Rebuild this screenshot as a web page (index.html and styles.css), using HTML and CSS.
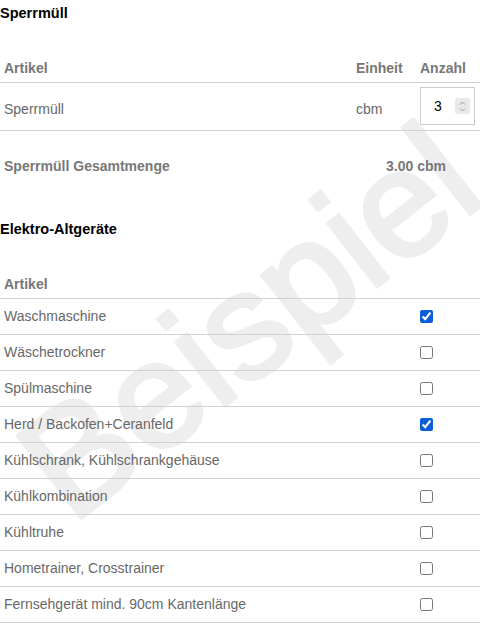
FILE: index.html
```html
<!DOCTYPE html>
<html lang="de">
<head>
    <meta charset="UTF-8">
    <meta name="viewport" content="width=device-width, initial-scale=1.0">
    <title>Abholung</title>
    <link rel="stylesheet" href="styles.css">
</head>
<body>
    <main class="page">
        <div class="watermark">Beispiel</div>

        <h2 class="section-title">Sperrmüll</h2>
        <table class="items">
            <thead>
                <tr>
                    <th>Artikel</th>
                    <th class="col-unit">Einheit</th>
                    <th class="col-qty">Anzahl</th>
                </tr>
            </thead>
            <tbody>
                <tr class="qty-row">
                    <td>Sperrmüll</td>
                    <td class="col-unit">cbm</td>
                    <td class="col-qty">
                        <div class="qty-wrap">
                            <input type="number" class="qty" value="3" min="0">
                            <span class="spinner">
                                <svg width="11" height="15" viewBox="0 0 11 15">
                                    <path d="M3 5.5 L5.5 3 L8 5.5" fill="none" stroke="#9a9a9a" stroke-width="1"/>
                                    <path d="M3 9.5 L5.5 12 L8 9.5" fill="none" stroke="#9a9a9a" stroke-width="1"/>
                                </svg>
                            </span>
                        </div>
                    </td>
                </tr>
            </tbody>
        </table>
        <div class="total">
            <span>Sperrmüll Gesamtmenge</span>
            <span class="total-value">3.00 cbm</span>
        </div>

        <h2 class="section-title second">Elektro-Altgeräte</h2>
        <table class="items checks">
            <thead>
                <tr>
                    <th>Artikel</th>
                    <th class="col-qty"></th>
                </tr>
            </thead>
            <tbody>
                <tr><td>Waschmaschine</td><td class="col-qty"><input type="checkbox" checked></td></tr>
                <tr><td>Wäschetrockner</td><td class="col-qty"><input type="checkbox"></td></tr>
                <tr><td>Spülmaschine</td><td class="col-qty"><input type="checkbox"></td></tr>
                <tr><td>Herd / Backofen+Ceranfeld</td><td class="col-qty"><input type="checkbox" checked></td></tr>
                <tr><td>Kühlschrank, Kühlschrankgehäuse</td><td class="col-qty"><input type="checkbox"></td></tr>
                <tr><td>Kühlkombination</td><td class="col-qty"><input type="checkbox"></td></tr>
                <tr><td>Kühltruhe</td><td class="col-qty"><input type="checkbox"></td></tr>
                <tr><td>Hometrainer, Crosstrainer</td><td class="col-qty"><input type="checkbox"></td></tr>
                <tr><td>Fernsehgerät mind. 90cm Kantenlänge</td><td class="col-qty"><input type="checkbox"></td></tr>
            </tbody>
        </table>
    </main>
</body>
</html>
```

FILE: styles.css
```css
body {
    margin: 0;
    background-color: #ffffff;
    font-family: "Liberation Sans", Arial, sans-serif;
    font-size: 14px;
    line-height: 16px;
    color: #686868;
}
.page {
    position: relative;
    z-index: 0;
    width: 480px;
    height: 640px;
    overflow: hidden;
}
.section-title {
    margin: 0;
    padding-top: 5px;
    font-size: 14.5px;
    line-height: 16px;
    font-weight: bold;
    color: #000000;
}
.section-title.second {
    margin-top: 42px;
}
.items {
    width: 100%;
    margin-top: 31px;
    border-collapse: collapse;
}
.items th {
    padding: 8px 4px 6px;
    text-align: left;
    font-weight: bold;
    color: #777777;
    border-bottom: 1px solid #d2d2d2;
}
.items td {
    padding: 9px 4px 10px;
    border-bottom: 1px solid #d2d2d2;
}
.col-unit {
    width: 56px;
}
.col-qty {
    width: 56px;
}
.qty-row td {
    padding-top: 7px;
    padding-bottom: 2px;
}
.qty-row td.col-qty {
    padding-top: 4px;
    padding-bottom: 5px;
}
.qty-wrap {
    position: relative;
    width: 55px;
    height: 38px;
}
.qty {
    display: block;
    box-sizing: border-box;
    width: 55px;
    height: 38px;
    margin: 0;
    padding: 0 4px 0 13px;
    border: 1px solid #cccccc;
    border-radius: 0;
    background-color: #ffffff;
    font-family: "Liberation Sans", Arial, sans-serif;
    font-size: 14px;
    color: #000000;
    text-align: left;
    -moz-appearance: textfield;
    appearance: textfield;
}
.qty::-webkit-inner-spin-button,
.qty::-webkit-outer-spin-button {
    -webkit-appearance: none;
    margin: 0;
}
.spinner {
    position: absolute;
    left: 35px;
    top: 11px;
    width: 15px;
    height: 16px;
    display: flex;
    align-items: center;
    justify-content: center;
    background-color: #e9e9e9;
    border-radius: 2px;
}
.checks td.col-qty {
    padding-top: 0;
    padding-bottom: 0;
    vertical-align: middle;
}
.checks input[type="checkbox"] {
    display: block;
    width: 13px;
    height: 13px;
    margin: 0;
    accent-color: #0b5fd6;
}
.total {
    display: flex;
    justify-content: space-between;
    margin-top: 27px;
    padding: 0 34px 0 4px;
    font-weight: bold;
    color: #777777;
}
/* watermark sits behind the tables */
.watermark {
    position: absolute;
    z-index: -1;
    left: 248px;
    top: 321px;
    transform: translate(-50%, -50%) rotate(-38deg);
    font-size: 151px;
    line-height: 151px;
    white-space: nowrap;
    color: #eeeeee;
    -webkit-text-stroke: 4px #eeeeee;
    pointer-events: none;
}
```
